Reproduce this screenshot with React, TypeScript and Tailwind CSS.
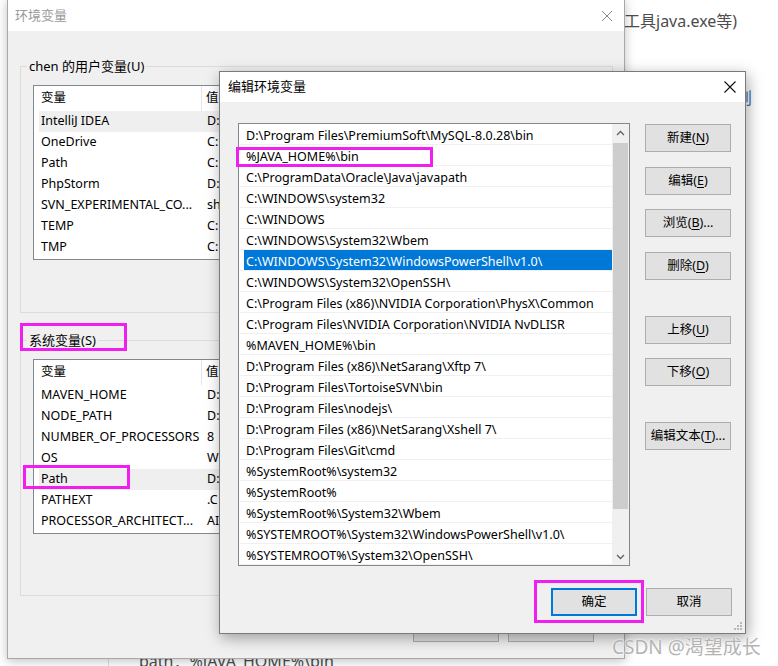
import React from "react";

const userVars: [string, string][] = [
  ["IntelliJ IDEA", "D:"],
  ["OneDrive", "C:"],
  ["Path", "C:"],
  ["PhpStorm", "D:"],
  ["SVN_EXPERIMENTAL_CO...", "sh"],
  ["TEMP", "C:"],
  ["TMP", "C:"],
];

const sysVars: [string, string][] = [
  ["MAVEN_HOME", "D:"],
  ["NODE_PATH", "D:"],
  ["NUMBER_OF_PROCESSORS", "8"],
  ["OS", "W"],
  ["Path", "D:"],
  ["PATHEXT", ".C"],
  ["PROCESSOR_ARCHITECT...", "AI"],
];

const paths = [
  "D:\\Program Files\\PremiumSoft\\MySQL-8.0.28\\bin",
  "%JAVA_HOME%\\bin",
  "C:\\ProgramData\\Oracle\\Java\\javapath",
  "C:\\WINDOWS\\system32",
  "C:\\WINDOWS",
  "C:\\WINDOWS\\System32\\Wbem",
  "C:\\WINDOWS\\System32\\WindowsPowerShell\\v1.0\\",
  "C:\\WINDOWS\\System32\\OpenSSH\\",
  "C:\\Program Files (x86)\\NVIDIA Corporation\\PhysX\\Common",
  "C:\\Program Files\\NVIDIA Corporation\\NVIDIA NvDLISR",
  "%MAVEN_HOME%\\bin",
  "D:\\Program Files (x86)\\NetSarang\\Xftp 7\\",
  "D:\\Program Files\\TortoiseSVN\\bin",
  "D:\\Program Files\\nodejs\\",
  "D:\\Program Files (x86)\\NetSarang\\Xshell 7\\",
  "D:\\Program Files\\Git\\cmd",
  "%SystemRoot%\\system32",
  "%SystemRoot%",
  "%SystemRoot%\\System32\\Wbem",
  "%SYSTEMROOT%\\System32\\WindowsPowerShell\\v1.0\\",
  "%SYSTEMROOT%\\System32\\OpenSSH\\",
];

function VarList({ rows, hl }: { rows: [string, string][]; hl: number }) {
  return (
    <div className="ml-[12px] w-[570px] h-[175px] border border-[#828790] bg-white flex flex-col">
      <div className="h-[25px] flex items-center shrink-0">
        <div className="w-[168px] pl-[7px] h-full flex items-center border-r border-[#e5e5e5]">变量</div>
        <div className="pl-[4px]">值</div>
      </div>
      {rows.map(([k, v], i) => (
        <div
          key={k}
          className={`h-[21px] ml-[5px] flex items-center shrink-0 ${i === hl ? "bg-[#efefef]" : ""}`}
        >
          <div className="w-[168px] pl-[2px] whitespace-nowrap">{k}</div>
          <div>{v}</div>
        </div>
      ))}
    </div>
  );
}

function Btn({ label, u, after, className = "" }: { label: string; u: string; after?: string; className?: string }) {
  return (
    <div
      className={`w-[86px] h-[28px] border border-[#adadad] bg-[#e1e1e1] flex items-center justify-center text-[12.5px] text-black ${className}`}
    >
      <span>
        {label}(<span className="underline underline-offset-2">{u}</span>){after}
      </span>
    </div>
  );
}

export default function App() {
  return (
    <div className="relative w-[778px] h-[666px] overflow-hidden bg-white font-['Noto_Sans','Noto_Sans_CJK_SC',sans-serif] text-[12.5px] text-black">
      {/* page text behind */}
      <div className="absolute left-[624px] top-[9px] text-[16px] leading-[24px] text-[#4d4d4d] whitespace-nowrap">
        工具java.exe等)
      </div>
      <div className="absolute left-[736px] top-[87px] text-[16px] leading-[22px] text-[#2d6db5] whitespace-nowrap">
        则
      </div>
      <div className="absolute left-[108px] top-[657px] w-px h-[12px] bg-[#dddddd]" />
      <div className="absolute left-[139px] top-[650px] text-[16px] leading-[22px] text-[#4d4d4d] whitespace-nowrap">
        path：%JAVA_HOME%\bin
      </div>

      {/* background dialog */}
      <div className="absolute left-[7px] top-[-1px] w-[618px] h-[660px] border border-[#a8a8a8] bg-[#f0f0f0] shadow-[0_2px_10px_rgba(0,0,0,0.25)] flex flex-col">
        <div className="h-[31px] bg-white flex items-center justify-between pl-[7px] pr-[9px] shrink-0">
          <span className="text-[13px] text-[#9a9a9a]">环境变量</span>
          <svg width="12" height="12" viewBox="0 0 12 12" className="mr-[2px]">
            <path d="M1 1 L11 11 M11 1 L1 11" stroke="#8a8a8a" strokeWidth="1" />
          </svg>
        </div>
        <div className="flex flex-col pl-[12px] pr-[12px]">
          {/* user group */}
          <div className="mt-[35px] w-[593px] h-[247px] border border-[#dcdcdc] flex flex-col">
            <div className="-mt-[10px] ml-[6px] px-[2px] bg-[#f0f0f0] self-start text-[13px] leading-[18px]">
              chen 的用户变量(U)
            </div>
            <div className="mt-[10px]">
              <VarList rows={userVars} hl={0} />
            </div>
          </div>
          {/* system group */}
          <div className="mt-[27px] w-[593px] h-[256px] border border-[#dcdcdc] flex flex-col">
            <div className="-mt-[10px] ml-[6px] px-[2px] bg-[#f0f0f0] self-start text-[13px] leading-[18px]">
              系统变量(S)
            </div>
            <div className="mt-[10px]">
              <VarList rows={sysVars} hl={4} />
            </div>
          </div>
          <div className="mt-[18px] flex gap-[9px] pl-[393px]">
            <div className="w-[86px] h-[28px] border border-[#adadad] bg-[#e1e1e1]" />
            <div className="w-[86px] h-[28px] border border-[#adadad] bg-[#e1e1e1]" />
          </div>
        </div>
      </div>

      {/* front dialog */}
      <div className="absolute left-[219px] top-[71px] w-[527px] h-[563px] border border-[#7a7a7a] bg-[#f0f0f0] shadow-[2px_4px_14px_rgba(0,0,0,0.35)] flex flex-col">
        <div className="h-[30px] bg-white flex items-center justify-between pl-[8px] pr-[9px] shrink-0">
          <span className="text-[13px] text-black">编辑环境变量</span>
          <svg width="12" height="12" viewBox="0 0 12 12">
            <path d="M0.5 0.5 L11.5 11.5 M11.5 0.5 L0.5 11.5" stroke="#111" strokeWidth="1.1" />
          </svg>
        </div>
        <div className="flex pl-[18px] pt-[21px]">
          <div className="w-[392px] h-[443px] border border-[#828790] bg-white flex">
            <div className="w-[373px] flex flex-col pl-[1px]">
              {paths.map((p, i) => (
                <div key={i} className="h-[21px] border-b border-[#f0f0f0] flex items-stretch shrink-0">
                  {i === 6 ? (
                    <div className="ml-[4px] flex-1 bg-[#0078d7] text-white pt-[4px] pl-[2px] leading-[16px] whitespace-nowrap">
                      {p}
                    </div>
                  ) : (
                    <div className="pl-[6px] pt-[4px] leading-[16px] whitespace-nowrap">{p}</div>
                  )}
                </div>
              ))}
            </div>
            <div className="w-[17px] bg-[#f0f0f0] flex flex-col items-center">
              <div className="h-[17px] flex items-center justify-center">
                <svg width="9" height="6" viewBox="0 0 9 6">
                  <path d="M1 5 L4.5 1.5 L8 5" stroke="#606060" strokeWidth="1.3" fill="none" />
                </svg>
              </div>
              <div className="mt-[2px] w-[15px] h-[366px] bg-[#cdcdcd]" />
              <div className="flex-1" />
              <div className="h-[17px] flex items-center justify-center">
                <svg width="9" height="6" viewBox="0 0 9 6">
                  <path d="M1 1 L4.5 4.5 L8 1" stroke="#606060" strokeWidth="1.3" fill="none" />
                </svg>
              </div>
            </div>
          </div>
          <div className="ml-[15px] flex flex-col pt-[1px]">
            <Btn label="新建" u="N" />
            <Btn label="编辑" u="E" className="mt-[15px]" />
            <Btn label="浏览" u="B" after="..." className="mt-[14px]" />
            <Btn label="删除" u="D" className="mt-[15px]" />
            <Btn label="上移" u="U" className="mt-[36px]" />
            <Btn label="下移" u="O" className="mt-[14px]" />
            <Btn label="编辑文本" u="T" after="..." className="mt-[36px]" />
          </div>
        </div>
        <div className="flex justify-end gap-[9px] pr-[13px] mt-[22px]">
          <div className="w-[86px] h-[28px] border-2 border-[#0078d7] bg-[#e1e1e1] flex items-center justify-center text-[12.5px]">
            确定
          </div>
          <div className="w-[86px] h-[28px] border border-[#adadad] bg-[#e1e1e1] flex items-center justify-center text-[12.5px]">
            取消
          </div>
        </div>
        <div className="flex-1" />
        <div className="flex justify-end pr-[3px] pb-[3px]">
          <svg width="8" height="8" viewBox="0 0 8 8">
            <rect x="6" y="0" width="2" height="2" fill="#b8b8b8" />
            <rect x="3" y="3" width="2" height="2" fill="#b8b8b8" />
            <rect x="6" y="3" width="2" height="2" fill="#b8b8b8" />
            <rect x="0" y="6" width="2" height="2" fill="#b8b8b8" />
            <rect x="3" y="6" width="2" height="2" fill="#b8b8b8" />
            <rect x="6" y="6" width="2" height="2" fill="#b8b8b8" />
          </svg>
        </div>
      </div>

      {/* annotation boxes */}
      <div className="absolute left-[20px] top-[323px] w-[107px] h-[28px] border-[3px] border-[#f01ef0]" />
      <div className="absolute left-[23px] top-[465px] w-[107px] h-[24px] border-[3px] border-[#f01ef0]" />
      <div className="absolute left-[236px] top-[147px] w-[197px] h-[20px] border-[3px] border-[#f01ef0]" />
      <div className="absolute left-[534px] top-[580px] w-[110px] h-[43px] border-[3px] border-[#f01ef0]" />

      {/* watermark */}
      <div className="absolute left-[612px] top-[635px] text-[19px] leading-[24px] text-[#b3b3b3] whitespace-nowrap [text-shadow:0_0_1px_#ffffff,0_0_2px_#ffffff]">
        CSDN @渴望成长
      </div>
    </div>
  );
}
